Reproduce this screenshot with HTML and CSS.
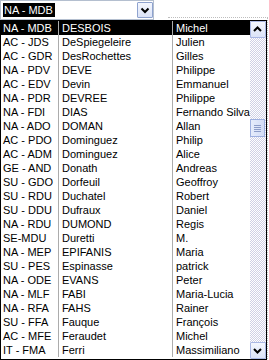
FILE: index.html
```html
<!DOCTYPE html>
<html>
<head>
<meta charset="utf-8">
<link rel="stylesheet" href="styles.css">
</head>
<body>
<div class="backdrop"></div>
<div class="combo">
  <span class="combo-text">NA - MDB</span>
  <span class="btn combo-btn"><svg width="16" height="16" viewBox="0 0 16 16"><path d="M4.5 6.5 L8 10 L11.5 6.5" fill="none" stroke="#000" stroke-width="2"/></svg></span>
</div>
<div class="list">
  <div class="rows">
    <div class="row sel"><span class="c1">NA - MDB</span><span class="c2">DESBOIS</span><span class="c3">Michel</span></div>
    <div class="row"><span class="c1">AC - JDS</span><span class="c2">DeSpiegeleire</span><span class="c3">Julien</span></div>
    <div class="row"><span class="c1">AC - GDR</span><span class="c2">DesRochettes</span><span class="c3">Gilles</span></div>
    <div class="row"><span class="c1">NA - PDV</span><span class="c2">DEVE</span><span class="c3">Philippe</span></div>
    <div class="row"><span class="c1">AC - EDV</span><span class="c2">Devin</span><span class="c3">Emmanuel</span></div>
    <div class="row"><span class="c1">NA - PDR</span><span class="c2">DEVREE</span><span class="c3">Philippe</span></div>
    <div class="row"><span class="c1">NA - FDI</span><span class="c2">DIAS</span><span class="c3">Fernando Silva</span></div>
    <div class="row"><span class="c1">NA - ADO</span><span class="c2">DOMAN</span><span class="c3">Allan</span></div>
    <div class="row"><span class="c1">AC - PDO</span><span class="c2">Dominguez</span><span class="c3">Philip</span></div>
    <div class="row"><span class="c1">AC - ADM</span><span class="c2">Dominguez</span><span class="c3">Alice</span></div>
    <div class="row"><span class="c1">GE - AND</span><span class="c2">Donath</span><span class="c3">Andreas</span></div>
    <div class="row"><span class="c1">SU - GDO</span><span class="c2">Dorfeuil</span><span class="c3">Geoffroy</span></div>
    <div class="row"><span class="c1">SU - RDU</span><span class="c2">Duchatel</span><span class="c3">Robert</span></div>
    <div class="row"><span class="c1">SU - DDU</span><span class="c2">Dufraux</span><span class="c3">Daniel</span></div>
    <div class="row"><span class="c1">NA - RDU</span><span class="c2">DUMOND</span><span class="c3">Regis</span></div>
    <div class="row"><span class="c1">SE-MDU</span><span class="c2">Duretti</span><span class="c3">M.</span></div>
    <div class="row"><span class="c1">NA - MEP</span><span class="c2">EPIFANIS</span><span class="c3">Maria</span></div>
    <div class="row"><span class="c1">SU - PES</span><span class="c2">Espinasse</span><span class="c3">patrick</span></div>
    <div class="row"><span class="c1">NA - ODE</span><span class="c2">EVANS</span><span class="c3">Peter</span></div>
    <div class="row"><span class="c1">NA - MLF</span><span class="c2">FABI</span><span class="c3">Maria-Lucia</span></div>
    <div class="row"><span class="c1">NA - RFA</span><span class="c2">FAHS</span><span class="c3">Rainer</span></div>
    <div class="row"><span class="c1">SU - FFA</span><span class="c2">Fauque</span><span class="c3">François</span></div>
    <div class="row"><span class="c1">AC - MFE</span><span class="c2">Feraudet</span><span class="c3">Michel</span></div>
    <div class="row"><span class="c1">IT - FMA</span><span class="c2">Ferri</span><span class="c3">Massimiliano</span></div>
  </div>
  <div class="scroll">
    <span class="btn sbtn"><svg width="15" height="17" viewBox="0 0 15 17"><path d="M4 10 L7.5 6.5 L11 10" fill="none" stroke="#000" stroke-width="2"/></svg></span>
    <div class="track">
      <span class="thumb"><i></i><i></i><i></i><i></i></span>
    </div>
    <span class="btn sbtn"><svg width="15" height="17" viewBox="0 0 15 17"><path d="M4 7 L7.5 10.5 L11 7" fill="none" stroke="#000" stroke-width="2"/></svg></span>
  </div>
</div>
</body>
</html>
```

FILE: styles.css
```css
html, body {
  margin: 0;
  padding: 0;
}
body {
  width: 269px;
  height: 360px;
  background: #fff;
  font: 11px "Liberation Sans", Arial, sans-serif;
  color: #000;
  position: relative;
  overflow: hidden;
}
.backdrop {
  position: absolute;
  top: 17px;
  left: 168px;
  width: 99px;
  height: 343px;
  border-top: 1px dotted #bdbdbd;
  border-right: 1px dotted #bdbdbd;
  z-index: 0;
}
.combo {
  position: relative;
  z-index: 1;
  width: 154px;
  height: 20px;
  box-sizing: border-box;
  border: 1px solid #b4bfcf;
  background: #fff;
  display: flex;
  align-items: center;
  padding: 0 0 0 2px;
}
.combo-text {
  background: #000;
  color: #fff;
  height: 14px;
  line-height: 14px;
  padding: 0 2px 0 1px;
}
.btn {
  display: flex;
  box-sizing: border-box;
  border: 1px solid #b9c6e6;
  background: linear-gradient(#f4f7fe, #dbe3f7);
  border-radius: 1px;
}
.combo-btn {
  margin-left: auto;
  margin-right: 0;
  width: 16px;
  height: 16px;
  border: 1px solid #8fa3cf;
}
.combo-btn svg { margin: -1px; }
.list {
  position: relative;
  z-index: 1;
  width: 267px;
  height: 340px;
  box-sizing: border-box;
  border: 1px solid #000;
  background: #fff;
  display: flex;
}
.rows {
  width: 249px;
}
.row {
  display: flex;
  height: 14px;
  line-height: 14px;
  white-space: nowrap;
}
.row span {
  box-sizing: border-box;
  overflow: hidden;
}
.c1 {
  width: 58px;
  padding-left: 2px;
  border-right: 1px solid #acacac;
}
.c2 {
  width: 114px;
  padding-left: 3px;
  border-right: 1px solid #acacac;
}
.c3 {
  flex: 1;
  padding-left: 3px;
}
.row.sel {
  background: #000;
  color: #fff;
}
.scroll {
  width: 16px;
  display: flex;
  flex-direction: column;
  background: repeating-conic-gradient(#ffffff 0 25%, #cfd0e6 0 50%) 0 0 / 2px 2px;
}
.sbtn {
  width: 16px;
  height: 17px;
  border-color: #aab8e4;
}
.sbtn svg { margin: -1px 0 0 -1px; }
.track {
  flex: 1;
  display: flex;
  flex-direction: column;
}
.thumb {
  margin-top: 81px;
  width: 15px;
  height: 18px;
  box-sizing: border-box;
  border: 1px solid #9eb0e0;
  background: linear-gradient(90deg, #e6ecfb, #d2dcf6);
  display: flex;
  flex-direction: column;
  align-items: center;
  justify-content: center;
  gap: 1px;
}
.thumb i {
  display: block;
  width: 7px;
  height: 1px;
  background: #8c9cc8;
}
```
